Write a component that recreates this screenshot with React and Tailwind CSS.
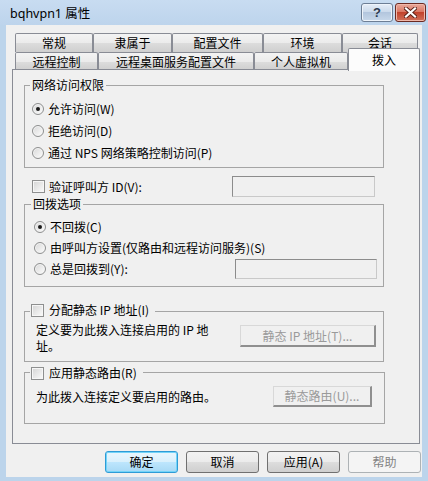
import React from "react";

const font = "font-['Noto_Sans_CJK_SC',sans-serif]";

function Tab({ label, w, selected }) {
  if (selected) {
    return (
      <div
        className={`relative z-10 h-[23px] -mb-px flex items-center justify-center rounded-t-[2px] border border-b-0 border-[#898c95] bg-[#fcfcfc] ${w}`}
      >
        <span className="-mt-[1px]">{label}</span>
      </div>
    );
  }
  return (
    <div
      className={`h-full flex items-center justify-center rounded-t-[2px] border border-b-0 border-[#898c95] bg-[linear-gradient(#f3f3f3,#ebebeb_50%,#dddddd_50%,#cfcfcf)] ${w}`}
    >
      {label}
    </div>
  );
}

function Radio({ checked }) {
  return (
    <span className="w-[12px] h-[12px] shrink-0 rounded-full border border-[#8e8f8f] bg-[linear-gradient(135deg,#d8d8d8,#fdfdfd)] shadow-[inset_0_0_0_1px_#f4f4f4] flex items-center justify-center">
      {checked && <span className="w-[4px] h-[4px] rounded-full bg-[#1a1a1a]" />}
    </span>
  );
}

function Check() {
  return (
    <span className="w-[13px] h-[13px] shrink-0 border border-[#8e8f8f] bg-[linear-gradient(135deg,#d4d4d4,#fbfbfb)] shadow-[inset_0_0_0_1px_#f6f6f6]" />
  );
}

function TextBox({ w, h }) {
  return (
    <div className={`${w} ${h} border border-[#c9c9c9] border-t-[#8c8c8c] border-l-[#8c8c8c] bg-[#f0f0f0]`} />
  );
}

function OldButton({ label, w }) {
  return (
    <div
      className={`${w} h-full flex items-center justify-center bg-[#f0f0f0] text-[#9a9a9a] border border-[#d8d8d8] border-b-2 border-r-2 border-b-[#8f8f8f] border-r-[#8f8f8f]`}
    >
      {label}
    </div>
  );
}

function DlgButton({ label, isDefault, disabled }) {
  let cls =
    "border-[#707070] bg-[linear-gradient(#f2f2f2,#ebebeb_50%,#dddddd_50%,#cfcfcf)] text-black";
  if (isDefault) {
    cls =
      "border-[#2e9bd6] shadow-[inset_0_0_0_1px_#74d4f8] bg-[linear-gradient(#eaf6fd,#d9f0fc_50%,#bee6fd_50%,#a7d9f5)] text-black";
  }
  if (disabled) {
    cls = "border-[#adb2b5] bg-[#f4f4f4] text-[#838383]";
  }
  return (
    <div className={`w-[73px] h-full flex items-center justify-center rounded-[3px] border ${cls}`}>
      {label}
    </div>
  );
}

export default function App() {
  return (
    <div className={`w-[428px] h-[481px] bg-[#bcd4eb] flex flex-col text-[12px] leading-[14px] text-black ${font}`}>
      {/* title bar */}
      <div className="h-[25px] flex justify-between bg-[linear-gradient(#c8dcf1,#bdd4ec)]">
        <div className="pl-[10px] pt-[6px] text-[12.5px] leading-[16px] font-['Noto_Sans','Noto_Sans_CJK_SC',sans-serif]">
          bqhvpn1 属性
        </div>
        <div className="flex gap-[2px] pt-[3px] pr-[2px]">
          <div className="w-[32px] h-[19px] rounded-[3px] border border-[#6d7e95] bg-[linear-gradient(#e6eef8,#c9d8ea_50%,#b3c6de_50%,#c8d8ea)] shadow-[inset_0_0_0_1px_#eef4fb] flex items-center justify-center">
            <span className="text-[13px] leading-none font-bold text-[#2c3a4e] font-['Liberation_Sans',sans-serif]">?</span>
          </div>
          <div className="w-[31px] h-[19px] rounded-[3px] border border-[#6b2a22] bg-[linear-gradient(#e9a99c,#d8735f_50%,#c2432d_50%,#d0715b)] shadow-[inset_0_0_0_1px_#f0b8aa] flex items-center justify-center">
            <svg width="13" height="11" viewBox="0 0 13 11">
              <path d="M2 1.5 L11 9.5 M11 1.5 L2 9.5" stroke="#5a2018" strokeWidth="4" strokeLinecap="square" />
              <path d="M2 1.5 L11 9.5 M11 1.5 L2 9.5" stroke="#ffffff" strokeWidth="2.2" strokeLinecap="square" />
            </svg>
          </div>
        </div>
      </div>

      {/* body */}
      <div className="mx-[6px] h-[452px] bg-[#f0f0f0] pl-[6px] pr-[2px] pt-[8px] flex flex-col">
        {/* tabs */}
        <div className="flex ml-[3px] h-[19px]">
          <Tab label="常规" w="w-[78px]" />
          <Tab label="隶属于" w="w-[79px]" />
          <Tab label="配置文件" w="w-[91px]" />
          <Tab label="环境" w="w-[79px]" />
          <Tab label="会话" w="w-[76px]" />
        </div>
        <div className="flex items-end ml-[3px] h-[18px]">
          <Tab label="远程控制" w="w-[83px]" />
          <Tab label="远程桌面服务配置文件" w="w-[156px]" />
          <Tab label="个人虚拟机" w="w-[94px]" />
          <Tab label="拨入" w="w-[72px]" selected />
        </div>

        {/* panel */}
        <div className="-mt-px h-[375px] border border-[#898c95] bg-[#f0f0f0] flex flex-col">
          {/* 网络访问权限 */}
          <div className="relative ml-[11px] mt-[15px] w-[360px] h-[83px] border border-[#a5a5a5] pl-[7px] pt-[12px]">
            <span className="absolute -top-[8px] left-[5px] px-[2px] bg-[#f0f0f0]">网络访问权限</span>
            <div className="h-[22px] flex items-center gap-[4px]">
              <Radio checked />
              <span>允许访问(W)</span>
            </div>
            <div className="h-[22px] flex items-center gap-[4px]">
              <Radio />
              <span>拒绝访问(D)</span>
            </div>
            <div className="h-[22px] flex items-center gap-[4px]">
              <Radio />
              <span>通过 NPS 网络策略控制访问(P)</span>
            </div>
          </div>

          {/* 验证呼叫方 */}
          <div className="mt-[8px] h-[21px] flex items-center pl-[19px]">
            <div className="w-[200px] flex items-center gap-[4px]">
              <Check />
              <span>验证呼叫方 ID(V):</span>
            </div>
            <TextBox w="w-[143px]" h="h-[21px]" />
          </div>

          {/* 回拨选项 */}
          <div className="relative ml-[11px] mt-[7px] w-[360px] h-[83px] border border-[#a5a5a5] pl-[9px] pt-[11px]">
            <span className="absolute -top-[8px] left-[6px] px-[2px] bg-[#f0f0f0]">回拨选项</span>
            <div className="h-[21px] flex items-center gap-[4px]">
              <Radio checked />
              <span>不回拨(C)</span>
            </div>
            <div className="h-[21px] flex items-center gap-[4px]">
              <Radio />
              <span>由呼叫方设置(仅路由和远程访问服务)(S)</span>
            </div>
            <div className="h-[21px] flex items-center">
              <div className="w-[201px] flex items-center gap-[4px]">
                <Radio />
                <span>总是回拨到(Y):</span>
              </div>
              <TextBox w="w-[142px]" h="h-[20px]" />
            </div>
          </div>

          {/* 分配静态 IP 地址 */}
          <div className="relative ml-[11px] mt-[24px] w-[360px] h-[51px] border border-[#a5a5a5] pl-[11px] pr-[7px] pt-[10px] flex items-start justify-between">
            <span className="absolute -top-[9px] left-[5px] pl-[1px] pr-[6px] bg-[#f0f0f0] flex items-center gap-[5px]">
              <Check />
              <span>分配静态 IP 地址(I)</span>
            </span>
            <div className="w-[190px] leading-[16px]">
              定义要为此拨入连接启用的 IP 地<br />址。
            </div>
            <div className="mt-[3px] h-[22px] flex">
              <OldButton label="静态 IP 地址(T)..." w="w-[136px]" />
            </div>
          </div>

          {/* 应用静态路由 */}
          <div className="relative ml-[11px] mt-[10px] w-[361px] h-[52px] border border-[#a5a5a5] pl-[11px] pr-[12px] pt-[13px]">
            <span className="absolute -top-[7px] left-[5px] pl-[1px] pr-[6px] bg-[#f0f0f0] flex items-center gap-[5px]">
              <Check />
              <span>应用静态路由(R)</span>
            </span>
            <div className="h-[21px] flex items-center justify-between">
              <span>为此拨入连接定义要启用的路由。</span>
              <OldButton label="静态路由(U)..." w="w-[99px]" />
            </div>
          </div>
        </div>

        {/* dialog buttons */}
        <div className="mt-[7px] h-[22px] flex justify-end gap-[8px] -mr-px">
          <DlgButton label="确定" isDefault />
          <DlgButton label="取消" />
          <DlgButton label="应用(A)" />
          <DlgButton label="帮助" disabled />
        </div>
      </div>
    </div>
  );
}
